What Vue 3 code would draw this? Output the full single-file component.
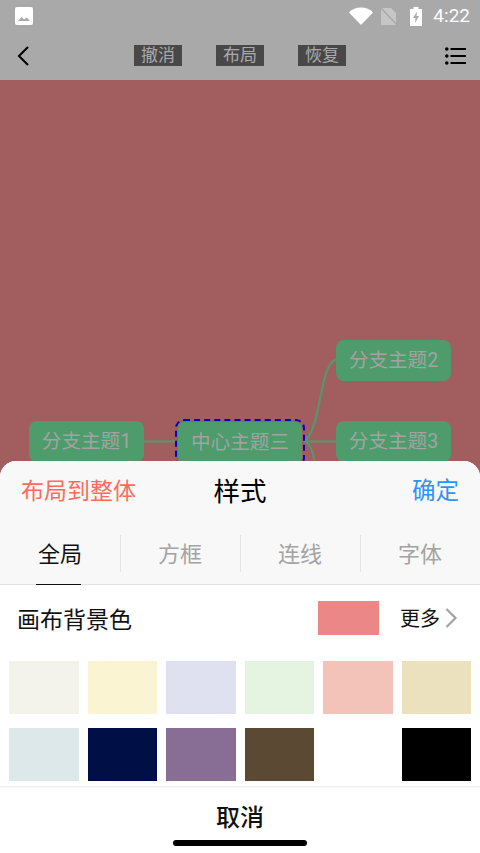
<script setup>
const tools = ['撤消', '布局', '恢复']
const tabs = ['全局', '方框', '连线', '字体']
const swatches = ['#f3f3ec', '#fbf4d2', '#dfe1f0', '#e5f3e1', '#f3c3b9', '#ebe1bf', '#dde8ea', '#000f45', '#886e95', '#5c4934', '#ffffff', '#000000']
</script>

<template>
  <div class="page">
    <header class="top">
      <div class="status">
        <svg class="pic" viewBox="0 0 18 18" width="18" height="18">
          <rect width="18" height="18" rx="2" fill="#fff" />
          <path d="M3 14l3.6-4 2.6 2.4 2.4-2 3.4 3.6z" fill="#a9a9a9" />
        </svg>
        <div class="status-right">
          <svg viewBox="0 0 24 18" width="24" height="18"><path d="M0 5.500C3 2.400 7.200 0.600 12 0.600s9 1.800 12 4.900L12 18z" fill="#fff" /></svg>
          <svg class="sim" viewBox="0 0 16 18" width="16" height="18">
            <path d="M0 1h10l5 5v12H0z" fill="#c6c6c6" />
            <path d="M0 1l16 17" stroke="#a9a9a9" stroke-width="1.5" />
          </svg>
          <svg class="bat" viewBox="0 0 12 19" width="12" height="19">
            <path d="M3.500 0h5v2H12v17H0V2h3.500z" fill="#fff" />
            <path d="M7 4.500L3 11h2.500L5 16l4-7H6.500z" fill="#a9a9a9" />
          </svg>
          <span class="time">4:22</span>
        </div>
      </div>
      <div class="toolbar">
        <svg class="back" viewBox="0 0 14 22" width="14" height="22"><path d="M12 2L3 11l9 9" fill="none" stroke="#000" stroke-width="2" /></svg>
        <div class="tools">
          <span v-for="t in tools" :key="t" class="tool">{{ t }}</span>
        </div>
        <svg class="list" viewBox="0 0 21 20" width="21" height="20">
          <circle cx="1.800" cy="3" r="1.800" fill="#000" /><circle cx="1.800" cy="10" r="1.800" fill="#000" /><circle cx="1.800" cy="17" r="1.800" fill="#000" />
          <path d="M5.500 3H21M5.500 10H21M5.500 17H21" stroke="#000" stroke-width="2" />
        </svg>
      </div>
    </header>

    <main class="canvas">
      <svg class="links" viewBox="0 0 480 773" width="480" height="773">
        <path d="M144 361.500h32M304 361.500h32" stroke="#4e9b6c" stroke-width="2" fill="none" />
        <path d="M305 361C322 345 319 285 336 279.500" stroke="#4e9b6c" stroke-width="2" fill="none" />
        <path d="M305 361C312 366 314 376 316 390" stroke="#4e9b6c" stroke-width="2" fill="none" />
      </svg>
      <div class="node n1">分支主题1</div>
      <div class="node n2">分支主题2</div>
      <div class="node n3">分支主题3</div>
      <div class="center-wrap"><div class="node center">中心主题三</div></div>
    </main>

    <section class="sheet">
      <div class="sheet-head">
        <span class="layout">布局到整体</span>
        <span class="title">样式</span>
        <span class="ok">确定</span>
      </div>
      <div class="tabs">
        <div v-for="(t, i) in tabs" :key="t" class="tab" :class="{ active: i === 0 }"><span class="tab-label">{{ t }}</span></div>
      </div>
      <div class="bg-row">
        <span class="bg-label">画布背景色</span>
        <span class="current"></span>
        <span class="more">更多</span>
        <svg class="chev" viewBox="0 0 13 20" width="13" height="20"><path d="M1.500 1l9 9-9 9" fill="none" stroke="#a3a3a3" stroke-width="2.200" /></svg>
      </div>
      <div class="grid">
        <span v-for="(c, i) in swatches" :key="i" class="swatch" :style="{ background: c }"></span>
      </div>
      <div class="cancel">取消</div>
      <div class="home"></div>
    </section>
  </div>
</template>

<style>
body { margin: 0; }
</style>

<style scoped>
.page {
  width: 480px;
  height: 853px;
  position: relative;
  overflow: hidden;
  display: flex;
  flex-direction: column;
  font-family: Roboto, "Noto Sans CJK SC", sans-serif;
}
.top { background: #a9a9a9; height: 80px; flex: none; }
.status {
  height: 32px;
  display: flex;
  align-items: center;
  justify-content: space-between;
  padding: 0 10px 0 15px;
}
.status-right { display: flex; align-items: center; }
.sim { margin-left: 8px; }
.bat { margin-left: 13px; }
.time { margin-left: 11px; font-size: 19px; color: #fff; line-height: 18px; }
.toolbar {
  height: 48px;
  display: flex;
  align-items: center;
  justify-content: space-between;
  padding: 0 14px 0 16px;
}
.back { margin-top: -1px; }
.tools { display: flex; gap: 34px; margin-top: -1px; margin-left: 5px; }
.tool {
  width: 48px;
  height: 21px;
  background: #484848;
  color: #aaa;
  font-size: 17px;
  line-height: 21px;
  text-align: center;
}
.canvas { flex: 1; background: #a25e5e; position: relative; }
.links { position: absolute; left: 0; top: 0; }
.node {
  position: absolute;
  background: #4e9b6c;
  color: #a3a3a3;
  font-size: 19.600px;
  border-radius: 8px;
  height: 41px;
  line-height: 42px;
  text-align: center;
  width: 115px;
}
.n1 { left: 29px; top: 341px; }
.n2 { left: 336px; top: 259.500px; }
.n3 { left: 336px; top: 341px; }
.center-wrap {
  position: absolute;
  left: 175px;
  top: 338.500px;
  width: 126px;
  height: 44px;
  border: 2px dashed #0a00c8;
  border-radius: 9px;
}
.center {
  left: 1px;
  top: 1px;
  width: 124px;
  border-radius: 6px;
}
.sheet {
  position: absolute;
  left: 0;
  right: 0;
  top: 461px;
  bottom: 0;
  background: #fff;
  border-radius: 16px 16px 0 0;
  overflow: hidden;
  display: flex;
  flex-direction: column;
}
.sheet-head {
  height: 61px;
  flex: none;
  background: #f8f8f8;
  display: flex;
  align-items: center;
  justify-content: space-between;
  padding: 0 21px 5px;
  box-sizing: border-box;
  position: relative;
}
.layout { color: #ff6a5e; font-size: 23px; }
.ok { color: #2f93f5; font-size: 23.500px; }
.title {
  position: absolute;
  left: 0;
  right: 0;
  text-align: center;
  font-size: 26.500px;
  color: #000;
  pointer-events: none;
}
.tabs {
  height: 63px;
  flex: none;
  background: #f8f8f8;
  display: flex;
  align-items: stretch;
  border-bottom: 1px solid #e2e2e2;
  box-sizing: border-box;
}
.tab {
  flex: 1;
  display: flex;
  align-items: center;
  justify-content: center;
  position: relative;
  color: #a3a3a3;
  font-size: 22px;
}
.tab-label { margin-top: -3px; }
.tab:not(:last-child)::after {
  content: "";
  position: absolute;
  right: -1px;
  top: 13px;
  width: 1px;
  height: 37px;
  background: #e4e4e4;
}
.tab.active { color: #111; }
.tab.active::before {
  content: "";
  position: absolute;
  left: 36px;
  width: 45px;
  bottom: -1px;
  height: 1.500px;
  background: #111;
}
.bg-row {
  height: 67px;
  flex: none;
  display: flex;
  align-items: center;
  padding: 0 22px 0 17px;
}
.bg-label { font-size: 23px; color: #111; flex: 1; margin-top: -2px; }
.current { width: 61px; height: 34px; background: #ec8787; margin-right: 21px; margin-top: -1px; }
.more { font-size: 20px; color: #111; margin-top: -2px; }
.chev { margin-left: 5px; margin-top: -1px; }
.grid {
  flex: none;
  display: grid;
  grid-template-columns: repeat(6, 1fr);
  column-gap: 9px;
  row-gap: 13.500px;
  padding: 9px 8.800px 5px 9px;
}
.swatch { height: 53px; }
.cancel {
  flex: none;
  height: 68px;
  border-top: 2px solid #f5f5f5;
  box-sizing: border-box;
  text-align: center;
  font-size: 24px;
  font-weight: 500;
  line-height: 60px;
  color: #111;
}
.home {
  position: absolute;
  left: 173px;
  bottom: 7px;
  width: 134px;
  height: 6px;
  border-radius: 3px;
  background: #000;
}
</style>
